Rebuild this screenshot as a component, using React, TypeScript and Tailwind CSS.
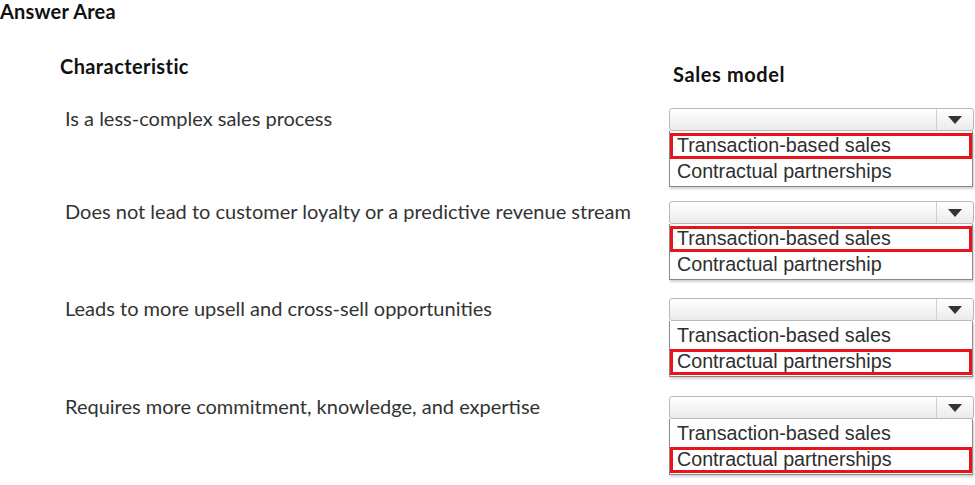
import React from "react";

type Row = { text: string; options: [string, string]; selected: 0 | 1 };

const rows: Row[] = [
  { text: "Is a less-complex sales process", options: ["Transaction-based sales", "Contractual partnerships"], selected: 0 },
  { text: "Does not lead to customer loyalty or a predictive revenue stream", options: ["Transaction-based sales", "Contractual partnership"], selected: 0 },
  { text: "Leads to more upsell and cross-sell opportunities", options: ["Transaction-based sales", "Contractual partnerships"], selected: 1 },
  { text: "Requires more commitment, knowledge, and expertise", options: ["Transaction-based sales", "Contractual partnerships"], selected: 1 },
];

const human = { fontFamily: "Lato, 'Open Sans', sans-serif" };
const arial = { fontFamily: "'Liberation Sans', Arial, sans-serif" };

function Dropdown({ options, selected }: { options: [string, string]; selected: 0 | 1 }) {
  return (
    <div className="w-[305px] flex flex-col">
      <div className="h-[23px] flex rounded-[3px] border border-[#b8b8b8] bg-gradient-to-b from-white to-[#ebebeb]">
        <div className="flex-1" />
        <div className="w-[37px] border-l border-[#d0d0d0] flex items-center justify-center">
          <svg width="14" height="8" viewBox="0 0 14 8">
            <path d="M0 0 L14 0 L7 8 Z" fill="#333" />
          </svg>
        </div>
      </div>
      <div className="w-[304px] bg-white border border-[#8a8a8a] border-t-0 shadow-[1px_2px_2px_rgba(0,0,0,0.18)] pt-[2px] pb-[1px]" style={arial}>
        {options.map((o, i) => (
          <div
            key={i}
            className={
              "h-[26px] flex items-center text-[19.7px] leading-none text-[#2e2e2e] " +
              (i === selected ? "border-[3px] border-[#e8141b] pl-[4px]" : "pl-[7px]")
            }
          >
            {o}
          </div>
        ))}
      </div>
    </div>
  );
}

export default function App() {
  return (
    <div className="w-[975px] h-[485px] bg-white overflow-hidden pt-[1px]">
      <div className="text-[20px] font-bold leading-[20px] text-[#111] tracking-[0.2px]" style={human}>
        Answer Area
      </div>
      <div className="flex mt-[35px]">
        <div className="w-[669px] pl-[60px] text-[20px] font-bold text-[#111] leading-[20px] tracking-[0.4px]" style={human}>
          Characteristic
        </div>
        <div className="pl-[4px] pt-[8px] text-[20px] font-bold text-[#111] leading-[20px] tracking-[0.6px]" style={human}>
          Sales model
        </div>
      </div>
      <div className="flex flex-col mt-[24px]">
        {rows.map((r, idx) => (
          <div key={idx} className={"flex " + (idx === 0 ? "h-[93px]" : idx === 1 ? "h-[97px]" : "h-[98px]")}>
            <div className="w-[669px] pl-[65px] h-[23px] pb-[4px] flex items-center text-[20px] leading-[20px] text-[#333]" style={human}>
              {r.text}
            </div>
            <Dropdown options={r.options} selected={r.selected} />
          </div>
        ))}
      </div>
    </div>
  );
}
